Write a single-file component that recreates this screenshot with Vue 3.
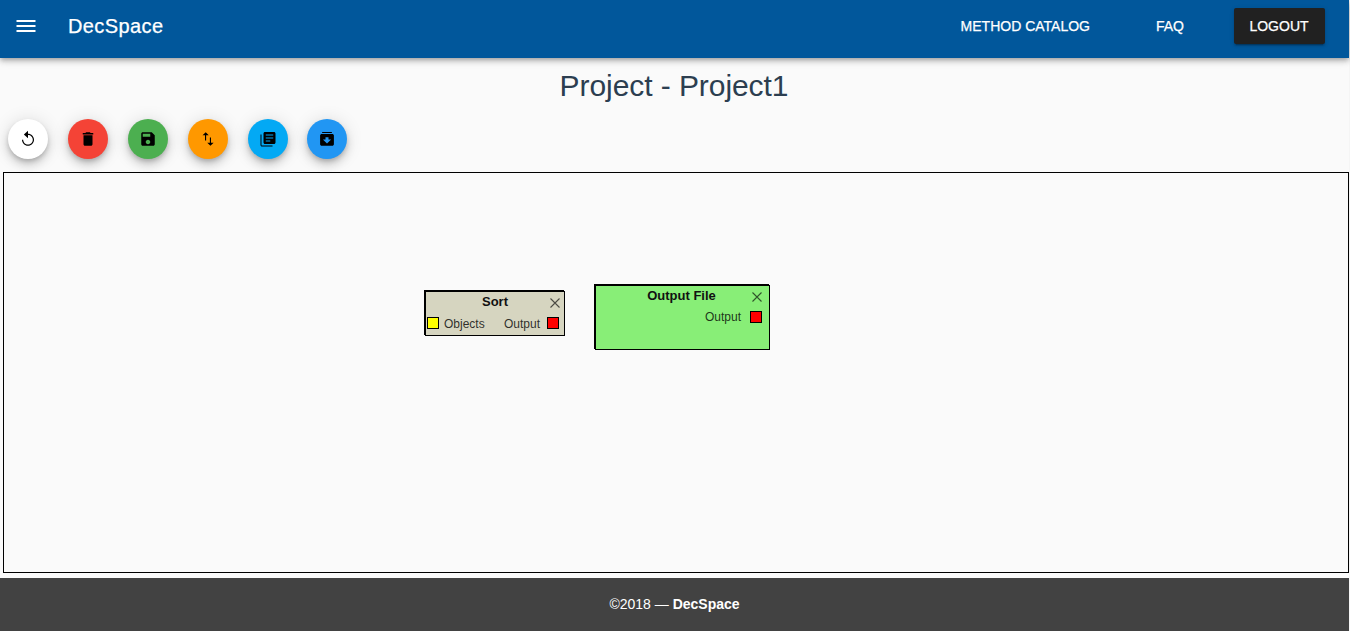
<script setup>
const actions = [
  { name: 'reset', color: '#ffffff', path: 'M12 5V1L6.5 6l5.5 5V6.6c3.5 0 6.4 2.8 6.4 6.4s-2.9 6.4-6.4 6.4S5.6 16.5 5.6 13H4c0 4.42 3.58 8 8 8s8-3.58 8-8-3.58-8-8-8z' },
  { name: 'delete', color: '#f44336', path: 'M6 19c0 1.1.9 2 2 2h8c1.1 0 2-.9 2-2V7H6v12zM19 4h-3.5l-1-1h-5l-1 1H5v2h14V4z' },
  { name: 'save', color: '#4caf50', path: 'M17 3H5c-1.11 0-2 .9-2 2v14c0 1.1.89 2 2 2h14c1.1 0 2-.9 2-2V7l-4-4zm-5 16c-1.66 0-3-1.34-3-3s1.34-3 3-3 3 1.34 3 3-1.34 3-3 3zm3-10H5V5h10v4z' },
  { name: 'import', color: '#ff9800', path: 'M16 17.01V10h-1.5v7.01H11L15.25 21l4.25-3.99H16zM9 3L4.75 6.99H8V14h1.5V6.99H13L9 3z' },
  { name: 'library', color: '#03a9f4', path: 'M3.3 6H2v14c0 1.1.9 2 2 2h14v-1.3H3.3V6zM20 2.500H8c-1.100 0-2 .9-2 2v12c0 1.100.9 2 2 2h12c1.100 0 2-.9 2-2v-12c0-1.100-.9-2-2-2zM19 11.300H9V9.900h10v1.400zm-4 4H9v-1.400h6v1.400zm4-8H9V5.900h10v1.400z' },
  { name: 'archive', color: '#2196f3', path: 'M5.500 2.700h13V4h-13V2.700zM5 5.300h14c1.200 0 2.200.9 2.200 2V19c0 1.200-1 2-2.200 2H5c-1.200 0-2.200-.8-2.200-2V7.300c0-1.100 1-2 2.200-2zM12 18l5.500-5.200H14V9.500h-4v3.300H6.500L12 18z' },
]
const nodes = [
  { title: 'Sort', kind: 'sort', input: 'Objects', output: 'Output' },
  { title: 'Output File', kind: 'file', input: '', output: 'Output' },
]
</script>

<template>
  <div class="page">
    <header class="bar">
      <svg class="menu" viewBox="0 0 24 24"><path d="M2.500 18h19v-2h-19v2zm0-5h19v-2h-19v2zm0-7v2h19V6h-19z" /></svg>
      <span class="brand">DecSpace</span>
      <nav class="nav">
        <a class="link">METHOD CATALOG</a>
        <a class="link faq">FAQ</a>
        <button class="logout">LOGOUT</button>
      </nav>
    </header>
    <h1 class="title">Project - Project1</h1>
    <div class="actions">
      <button v-for="a in actions" :key="a.name" class="fab" :class="a.name" :style="{ background: a.color }">
        <svg viewBox="0 0 24 24"><path :d="a.path" fill-rule="evenodd" /></svg>
      </button>
    </div>
    <main class="canvas">
      <section v-for="n in nodes" :key="n.title" class="node" :class="n.kind">
        <div class="name">{{ n.title }}</div>
        <svg class="close" viewBox="0 0 10 10"><path d="M.5.5l9 9M9.5.5l-9 9" /></svg>
        <div class="ports">
          <template v-if="n.input"><i class="port in"></i><span class="label">{{ n.input }}</span></template>
          <span class="label out-label">{{ n.output }}</span><i class="port out"></i>
        </div>
      </section>
    </main>
    <footer class="foot"><span>©2018 — <b>DecSpace</b></span></footer>
  </div>
</template>

<style>
body { background: #f5f5f5; overflow: hidden; }
</style>

<style scoped>
.page { width: 1349px; height: 631px; display: flex; flex-direction: column; background: #fafafa; font-family: "Liberation Sans", Arial, sans-serif; font-size: 14px; }
.page, .page * { box-sizing: border-box; }
.bar { flex: none; height: 58px; padding: 0 24px 6px 14px; display: flex; align-items: center; background: #01579b; color: #fff; box-shadow: 0 2px 4px -1px rgba(0,0,0,.2), 0 4px 5px rgba(0,0,0,.14), 0 1px 10px rgba(0,0,0,.12); -webkit-text-stroke: .25px currentColor; }
.menu { width: 24px; height: 24px; fill: #fff; }
.brand { margin-left: 30px; font-size: 20px; font-weight: 500; letter-spacing: .02em; }
.nav { margin-left: auto; display: flex; align-items: center; }
.link { font-weight: 500; }
.faq { margin-left: 66px; }
.logout { width: 91px; height: 36px; margin-left: 50px; padding: 0 1px 0 0; border: 0; border-radius: 2px; background: #212121; color: #fff; font: 500 14px "Liberation Sans", Arial, sans-serif; -webkit-text-stroke: .25px currentColor; box-shadow: 0 3px 1px -2px rgba(0,0,0,.2), 0 2px 2px rgba(0,0,0,.14), 0 1px 5px rgba(0,0,0,.12); }
.title { margin: 10px 0 0; padding-right: 1px; height: 36px; line-height: 36px; font-size: 30px; font-weight: 400; letter-spacing: -.07px; text-align: center; color: #2c3e50; }
.actions { display: flex; gap: 20px; padding: 15px 8px 0; height: 68px; }
.fab { display: flex; align-items: center; justify-content: center; width: 40px; height: 40px; border: 0; padding: 0; border-radius: 50%; box-shadow: 0 3px 5px -1px rgba(0,0,0,.2), 0 6px 10px rgba(0,0,0,.14), 0 1px 18px rgba(0,0,0,.12); }
.fab svg { width: 18px; height: 18px; }
.archive { margin-left: -1px; }
.canvas { position: relative; flex: none; width: 1346px; height: 401px; margin-left: 3px; border: 1px solid #000; }
.node { position: absolute; border: 1px solid #000; box-shadow: -1px -1px 0 #000; }
.sort { left: 421px; top: 118px; width: 140px; height: 45px; background: #d6d5c0; }
.file { left: 591px; top: 112px; width: 175px; height: 65px; background: #88ee77; }
.name { height: 20px; line-height: 19px; text-align: center; font-size: 13px; font-weight: 700; color: #111; }
.file .name { padding-right: 2px; }
.close { position: absolute; top: 6px; right: 4px; width: 10px; height: 10px; stroke: #000; stroke-opacity: .65; stroke-width: 1.1; fill: none; }
.file .close { right: 7px; }
.ports { display: flex; align-items: center; height: 22px; padding: 0 5px 0 1px; font-size: 12px; }
.file .ports { padding-right: 7px; }
.label { color: rgba(0,0,0,.8); }
.sort .label { padding-top: 2px; }
.port { width: 12px; height: 12px; border: 1px solid #000; }
.in { margin-right: 5px; background: #ff0; }
.out { margin-left: 7px; background: red; }
.file .out { margin-left: 9px; }
.out-label { margin-left: auto; }
.foot { flex: none; height: 53px; margin-top: 5px; padding-bottom: 2px; display: flex; align-items: center; justify-content: center; background: #424242; color: #fff; }
</style>
